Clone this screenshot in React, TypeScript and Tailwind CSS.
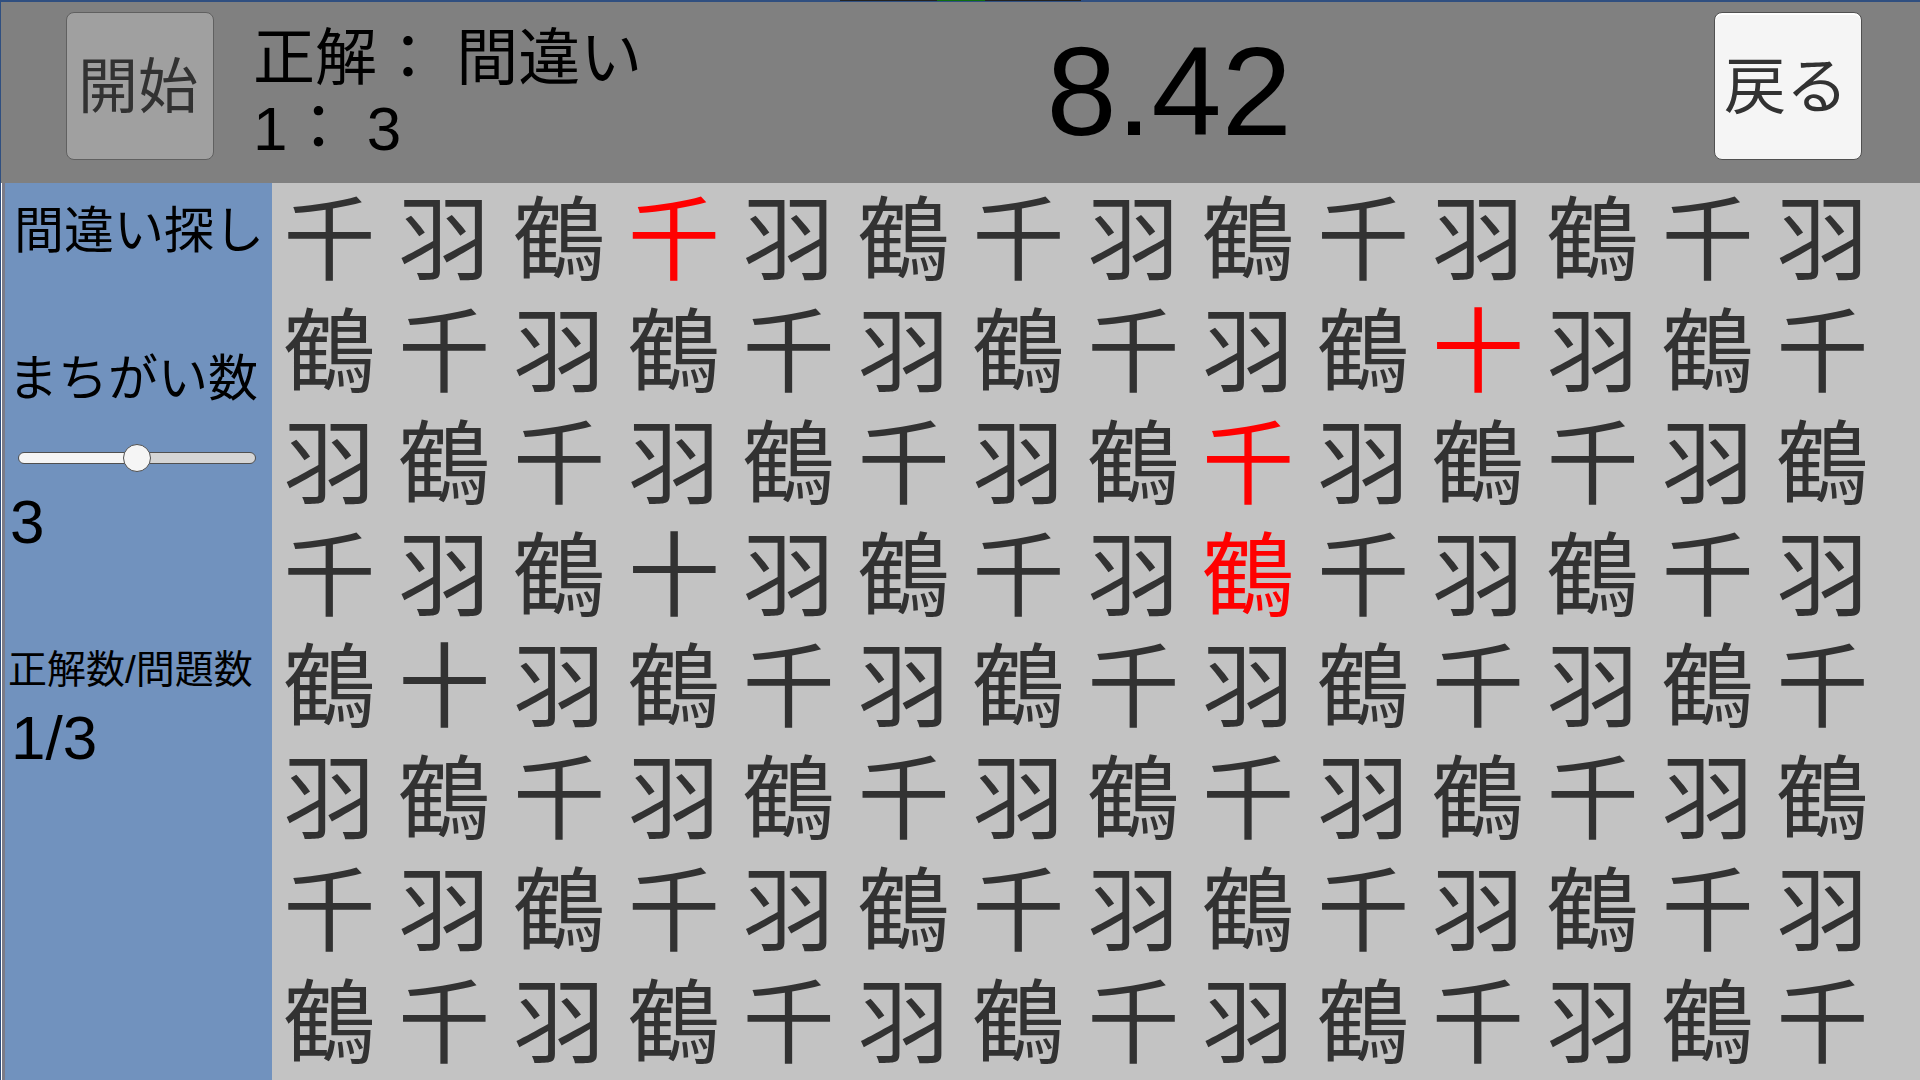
import { useState } from "react";

const ROWS = [
  "千羽鶴千羽鶴千羽鶴千羽鶴千羽",
  "鶴千羽鶴千羽鶴千羽鶴十羽鶴千",
  "羽鶴千羽鶴千羽鶴千羽鶴千羽鶴",
  "千羽鶴十羽鶴千羽鶴千羽鶴千羽",
  "鶴十羽鶴千羽鶴千羽鶴千羽鶴千",
  "羽鶴千羽鶴千羽鶴千羽鶴千羽鶴",
  "千羽鶴千羽鶴千羽鶴千羽鶴千羽",
  "鶴千羽鶴千羽鶴千羽鶴千羽鶴千",
];

const INITIAL_MARKED = ["0-3", "1-10", "2-8", "3-8"];

function TopStrip() {
  return (
    <div className="flex h-[2px] shrink-0 justify-center bg-[#304f80]">
      <div className="flex h-px w-[241px] justify-center bg-[#222222]">
        <div className="w-12 bg-[#0f6e0f]" />
      </div>
    </div>
  );
}

function Header() {
  return (
    <header className="flex h-[181px] shrink-0 items-start bg-[#808080] pr-[58px] pl-[65px]">
      <button
        type="button"
        disabled
        className="mt-[10px] flex h-[148px] w-[148px] items-center justify-center rounded-lg border border-[#606060] bg-[#a0a0a0] pt-1 pr-1 text-[60px] leading-none text-[#323232]"
      >
        開始
      </button>
      <div className="mt-[22px] ml-[39px] text-[62px] leading-[70px] whitespace-nowrap">
        <p>正解： 間違い</p>
        <p>1： 3</p>
      </div>
      <p className="flex-1 pt-[20px] pl-[128px] text-center text-[126px] leading-[140px]">
        8.42
      </p>
      <button
        type="button"
        className="mt-[10px] ml-[146px] flex h-[148px] w-[148px] items-center justify-center rounded-lg border border-[#505050] bg-[#f5f5f5] pt-1 pr-1 text-[62px] leading-none text-[#323232] shadow-[inset_0_2px_0_#ffffff]"
      >
        戻る
      </button>
    </header>
  );
}

function Sidebar() {
  const [count, setCount] = useState(3);
  const fill = ((count - 1) / 4) * 100;
  return (
    <aside className="flex w-[271px] shrink-0 flex-col border-l border-white bg-[#7192be] whitespace-nowrap">
      <div className="flex-1 border-l-3 border-[#7c7c88] pt-[18px]">
        <h1 className="pl-[9px] text-[50px] leading-[60px]">間違い探し</h1>
        <label htmlFor="count" className="mt-[88px] block pl-[3px] text-[50px] leading-[60px]">
          まちがい数
        </label>
        <div className="mt-[35px] mr-4 ml-[13px] flex h-7 items-center">
          <input
            id="count"
            type="range"
            min={1}
            max={5}
            value={count}
            onChange={(e) => setCount(Number(e.target.value))}
            style={{
              backgroundImage: `linear-gradient(to right, #f5f5f5 ${fill}%, #d5d5d5 ${fill}%)`,
            }}
            className="h-3 w-full appearance-none rounded-full border border-[#505050] [&::-webkit-slider-thumb]:size-7 [&::-webkit-slider-thumb]:appearance-none [&::-webkit-slider-thumb]:rounded-full [&::-webkit-slider-thumb]:border [&::-webkit-slider-thumb]:border-[#505050] [&::-webkit-slider-thumb]:bg-[#f5f5f5]"
          />
        </div>
        <p className="mt-[18px] pl-[5px] text-[62px] leading-[64px]">{count}</p>
        <h2 className="mt-[92px] pl-[3px] text-[39px] leading-[48px]">正解数/問題数</h2>
        <p className="mt-[12px] pl-[6px] text-[62px] leading-[64px]">1/3</p>
      </div>
    </aside>
  );
}

function Board() {
  const [marked, setMarked] = useState(INITIAL_MARKED);
  return (
    <main className="grid flex-1 grid-cols-14 grid-rows-8 bg-[#c3c3c3] pt-[2px] pr-[40px]">
      {ROWS.flatMap((row, r) =>
        [...row].map((char, c) => {
          const key = `${r}-${c}`;
          const color = marked.includes(key) ? "text-[#ff0000]" : "text-[#323232]";
          return (
            <button
              key={key}
              type="button"
              onClick={() => setMarked([...marked, key])}
              className={`flex items-center justify-center text-[92px] leading-none ${color}`}
            >
              {char}
            </button>
          );
        }),
      )}
    </main>
  );
}

export default function App() {
  return (
    <div
      lang="ja"
      className="flex min-h-screen flex-col border-l border-[#304f80] font-['Liberation_Sans','Noto_Sans_CJK_JP',sans-serif] text-black"
    >
      <TopStrip />
      <Header />
      <div className="flex flex-1">
        <Sidebar />
        <Board />
      </div>
    </div>
  );
}
